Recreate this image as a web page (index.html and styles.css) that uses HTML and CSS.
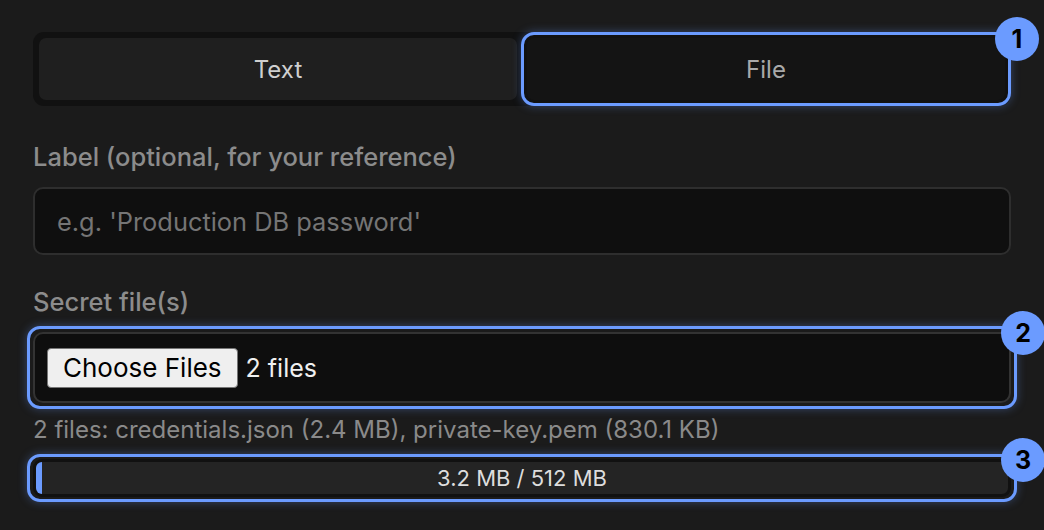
FILE: index.html
```html
<!DOCTYPE html>
<html lang="en">
<head>
    <meta charset="UTF-8">
    <meta name="viewport" content="width=device-width, initial-scale=1.0">
    <title>New Secret</title>
    <link rel="stylesheet" href="styles.css">
</head>
<body>
<div class="container">
    <div class="tabs">
        <button type="button" class="tab">Text</button>
        <div class="hl">
            <button type="button" class="tab active">File</button>
            <span class="badge">1</span>
        </div>
    </div>

    <div class="input-group">
        <label for="label">Label (optional, for your reference)</label>
        <input type="text" id="label" name="label" placeholder="e.g. 'Production DB password'">
    </div>

    <div class="input-group">
        <label>Secret file(s)</label>
        <div class="hl">
            <div class="file-box">
                <span class="file-btn">Choose Files</span>
                <span class="file-count">2 files</span>
            </div>
            <span class="badge">2</span>
        </div>
        <div class="file-info">2 files: credentials.json (2.4 MB), private-key.pem (830.1 KB)</div>
        <div class="hl hl-bar">
            <div class="quota">
                <div class="quota-fill" style="width: 0.625%"></div>
                <span class="quota-text">3.2 MB / 512 MB</span>
            </div>
            <span class="badge">3</span>
        </div>
    </div>
</div>
</body>
</html>
```

FILE: styles.css
```css
body {
    font-family: Inter, "Liberation Sans", Arial, sans-serif;
    margin: 0;
    padding: 0;
    background-color: #1b1b1b;
    color: #ddd;
}
.container {
    width: 978px;
    padding: 32px 33px;
}
.tabs {
    display: grid;
    grid-template-columns: 1fr 1fr;
    gap: 10px;
    padding: 6px;
    margin-bottom: 36px;
    background-color: #111;
    border-radius: 11px;
}
.tab {
    width: 100%;
    height: 62px;
    border: none;
    border-radius: 7px;
    background-color: #1f1f1f;
    color: #cfcfcf;
    font-family: inherit;
    font-size: 24px;
}
.tab.active {
    background-color: #141414;
    color: #a9a9a9;
}
.hl {
    position: relative;
}
.hl::after {
    content: "";
    position: absolute;
    inset: -6px;
    border: 3px solid #6b9bff;
    border-radius: 13px;
    box-shadow: 0 0 10px rgba(107, 155, 255, 0.35);
    pointer-events: none;
}
.hl-bar::after {
    inset: -5px -6px;
}
.badge {
    position: absolute;
    top: -21px;
    right: -34px;
    z-index: 1;
    width: 44px;
    height: 44px;
    border-radius: 50%;
    background-color: #6b9bff;
    color: #000;
    font-size: 25px;
    font-weight: 700;
    display: flex;
    align-items: center;
    justify-content: center;
}
.input-group {
    margin-top: 32px;
}
.input-group label {
    display: block;
    margin-bottom: 15px;
    color: #8c8c8c;
    font-size: 25.5px;
    font-weight: 500;
    line-height: 30px;
}
input[type="text"] {
    box-sizing: border-box;
    width: 100%;
    height: 68px;
    padding: 0 22px;
    background-color: #0f0f0f;
    border: 2px solid #2e2e2e;
    border-radius: 10px;
    color: #ddd;
    font-family: inherit;
    font-size: 25.4px;
}
input[type="text"]::placeholder {
    color: #757575;
}
.file-box {
    box-sizing: border-box;
    height: 71px;
    display: flex;
    align-items: center;
    gap: 8px;
    padding: 0 12px;
    background-color: #0e0e0e;
    border: 2px solid #333;
    border-radius: 10px;
}
.file-btn {
    padding: 3px 15px;
    background-color: #efefef;
    border: 1px solid #767676;
    border-radius: 4px;
    color: #000;
    font-size: 26px;
    line-height: 32px;
}
.file-count {
    color: #f0f0f0;
    font-size: 25px;
}
.file-info {
    margin: 12px 0 14px;
    color: #8a8a8a;
    font-size: 24px;
    line-height: 30px;
}
.quota {
    position: relative;
    box-sizing: border-box;
    height: 38px;
    background-color: #242424;
    border: 3px solid #111;
    border-radius: 9px;
    overflow: hidden;
}
.quota-fill {
    height: 100%;
    background-color: #6b9bff;
}
.quota-text {
    position: absolute;
    inset: 0;
    display: flex;
    align-items: center;
    justify-content: center;
    color: #ddd;
    font-size: 22px;
}
```
